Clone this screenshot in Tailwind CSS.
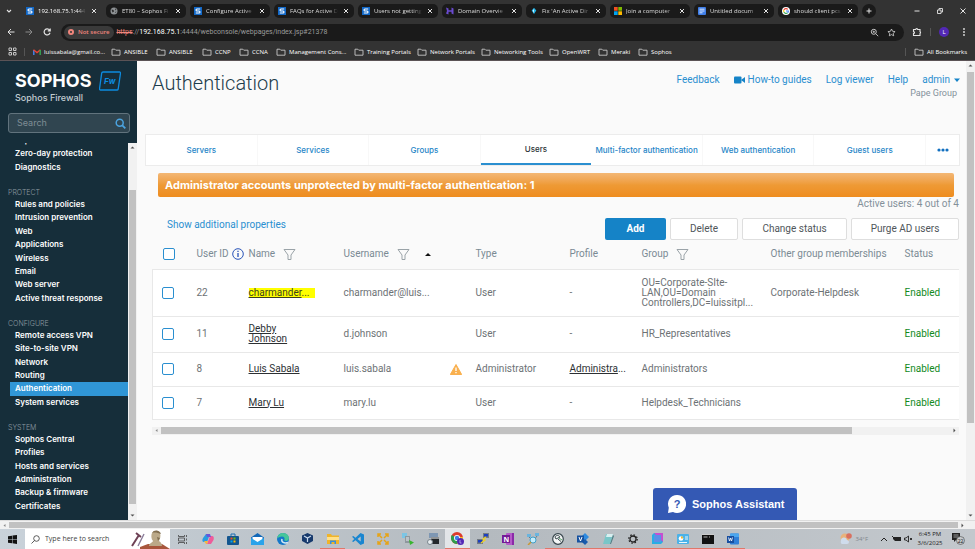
<!DOCTYPE html>
<html lang="en">
<head>
  <meta charset="UTF-8" />
  <meta name="viewport" content="width=device-width, initial-scale=1.0" />
  <title>Authentication - Sophos Firewall</title>
  <script src="https://cdn.jsdelivr.net/npm/@tailwindcss/browser@4"></script>
</head>
<body class="flex flex-col h-screen overflow-hidden bg-[#fafafa] font-[Roboto,'Liberation_Sans',sans-serif]">

  <!-- Shared icons -->
  <svg class="hidden">
    <symbol id="close" viewBox="0 0 8 8"><path d="M2 2l4 4M6 2l-4 4" stroke="#e3e3e3" stroke-width="1" /></symbol>
    <symbol id="folder" viewBox="0 0 10 8"><path d="M1 1.2h2.8l1 1h4.2v5h-8z" fill="none" stroke="#c7c7c7" stroke-width="0.9" stroke-linejoin="round" /></symbol>
    <symbol id="sophos" viewBox="0 0 8 8"><rect width="8" height="8" fill="#1268c7" /><path d="M6.2 2H3a1 1 0 0 0 0 2h2a1 1 0 0 1 0 2H1.8" fill="none" stroke="#fff" stroke-width="1.1" /></symbol>
    <symbol id="filter" viewBox="0 0 13 13"><path d="M1 1.5h11L8 7v4.5H5V7z" fill="none" stroke="#9aa3a8" stroke-width="1" stroke-linejoin="round" /></symbol>
  </svg>

  <!-- Browser chrome -->
  <header class="shrink-0 bg-[#333333] text-[#dedede] text-[6px] leading-[8px] font-['Open_Sans',sans-serif] border-b border-[#5b5356]">
    <div class="flex items-center h-[21px] gap-1">
      <button class="w-[18px] flex justify-center" aria-label="Search tabs">
        <svg class="size-2" viewBox="0 0 8 8"><path d="M2 3l2 2 2-2" fill="none" stroke="#e3e3e3" stroke-width="1.1" /></svg>
      </button>
      <div class="flex items-center w-20 h-[14px] px-1 gap-1 text-white">
        <svg class="size-2 shrink-0"><use href="#sophos" /></svg>
        <span class="flex-1 whitespace-nowrap mask-r-from-80%">192.168.75.1:444</span>
        <button aria-label="Close"><svg class="size-2"><use href="#close" /></svg></button>
      </div>
      <div class="flex items-center w-20 h-[14px] px-1 gap-1 rounded-[5px] bg-[#1a1a1a]">
        <svg class="size-2 shrink-0" viewBox="0 0 8 8"><circle cx="4" cy="4" r="3.5" fill="#8d9194" /><path d="M1.5 2.5l2 .5.5 1.5-1.5 1zM5 1.2l1.5 1.3-1 1zM5 5l1.5-.5-.8 1.6z" fill="#2b2b2b" /></svg>
        <span class="flex-1 whitespace-nowrap mask-r-from-80%">ET80 – Sophos Fi</span>
        <button aria-label="Close"><svg class="size-2"><use href="#close" /></svg></button>
      </div>
      <div class="flex items-center w-20 h-[14px] px-1 gap-1 rounded-[5px] bg-[#1a1a1a]">
        <svg class="size-2 shrink-0"><use href="#sophos" /></svg>
        <span class="flex-1 whitespace-nowrap mask-r-from-80%">Configure Active</span>
        <button aria-label="Close"><svg class="size-2"><use href="#close" /></svg></button>
      </div>
      <div class="flex items-center w-20 h-[14px] px-1 gap-1 rounded-[5px] bg-[#1a1a1a]">
        <svg class="size-2 shrink-0"><use href="#sophos" /></svg>
        <span class="flex-1 whitespace-nowrap mask-r-from-80%">FAQs for Active D</span>
        <button aria-label="Close"><svg class="size-2"><use href="#close" /></svg></button>
      </div>
      <div class="flex items-center w-20 h-[14px] px-1 gap-1 rounded-[5px] bg-[#1a1a1a]">
        <svg class="size-2 shrink-0"><use href="#sophos" /></svg>
        <span class="flex-1 whitespace-nowrap mask-r-from-80%">Users not getting</span>
        <button aria-label="Close"><svg class="size-2"><use href="#close" /></svg></button>
      </div>
      <div class="flex items-center w-20 h-[14px] px-1 gap-1 rounded-[5px] bg-[#1a1a1a]">
        <svg class="size-2 shrink-0" viewBox="0 0 8 8"><path d="M0 .5l2.5 1v1.7h3V.5l2 1v6l-2-1V4.8h-3v2.7l-2.5-1 1-2.5z" fill="#6a4bd0" /></svg>
        <span class="flex-1 whitespace-nowrap mask-r-from-80%">Domain Overvie</span>
        <button aria-label="Close"><svg class="size-2"><use href="#close" /></svg></button>
      </div>
      <div class="flex items-center w-20 h-[14px] px-1 gap-1 rounded-[5px] bg-[#1a1a1a]">
        <svg class="size-2 shrink-0" viewBox="0 0 8 8"><path d="M4 .8l2.3 2.7L4 7 1.7 3.5z" fill="#23b5e8" /><path d="M4 2v4l-1.3-2.3z" fill="#d9f6ff" /></svg>
        <span class="flex-1 whitespace-nowrap mask-r-from-80%">Fix 'An Active Dir</span>
        <button aria-label="Close"><svg class="size-2"><use href="#close" /></svg></button>
      </div>
      <div class="flex items-center w-20 h-[14px] px-1 gap-1 rounded-[5px] bg-[#1a1a1a]">
        <svg class="size-2 shrink-0" viewBox="0 0 8 8"><path d="M0 0h3.7v3.7H0z" fill="#f25022" /><path d="M4.3 0H8v3.7H4.3z" fill="#7fba00" /><path d="M0 4.3h3.7V8H0z" fill="#00a4ef" /><path d="M4.3 4.3H8V8H4.3z" fill="#ffb900" /></svg>
        <span class="flex-1 whitespace-nowrap mask-r-from-80%">Join a computer</span>
        <button aria-label="Close"><svg class="size-2"><use href="#close" /></svg></button>
      </div>
      <div class="flex items-center w-20 h-[14px] px-1 gap-1 rounded-[5px] bg-[#1a1a1a]">
        <svg class="size-2 shrink-0" viewBox="0 0 8 8"><rect width="8" height="8" rx="1" fill="#3f7ee8" /><path d="M1.5 2.2h5M1.5 4h5M1.5 5.8h3" stroke="#fff" stroke-width=".8" /></svg>
        <span class="flex-1 whitespace-nowrap mask-r-from-80%">Untitled docum</span>
        <button aria-label="Close"><svg class="size-2"><use href="#close" /></svg></button>
      </div>
      <div class="flex items-center w-20 h-[14px] px-1 gap-1 rounded-[5px] bg-[#1a1a1a]">
        <svg class="size-2 shrink-0" viewBox="0 0 8 8"><circle cx="4" cy="4" r="4" fill="#fff" /><g fill="none" stroke-width="1.1"><path d="M5.8 2.4A2.4 2.4 0 0 0 1.9 2.9" stroke="#ea4335" /><path d="M1.9 2.9a2.4 2.4 0 0 0 0 2.2" stroke="#fbbc05" /><path d="M1.9 5.1a2.4 2.4 0 0 0 3.7.7" stroke="#34a853" /><path d="M5.6 5.8A2.4 2.4 0 0 0 6.4 4H4" stroke="#4285f4" /></g></svg>
        <span class="flex-1 whitespace-nowrap mask-r-from-80%">should client pcs</span>
        <button aria-label="Close"><svg class="size-2"><use href="#close" /></svg></button>
      </div>
      <button class="size-[14px] rounded-full bg-[#1a1a1a] flex items-center justify-center" aria-label="New tab">
        <svg class="size-2" viewBox="0 0 8 8"><path d="M4 1.5v5M1.5 4h5" stroke="#e3e3e3" /></svg>
      </button>
      <div class="flex ml-auto pr-2 gap-[15px]">
        <button aria-label="Minimize"><svg class="size-2" viewBox="0 0 8 8"><path d="M1.5 4h5" stroke="#e3e3e3" /></svg></button>
        <button aria-label="Restore"><svg class="size-2" viewBox="0 0 8 8"><path d="M1.5 3h3.5v3.5H1.5zM3 3V1.5h3.5V5H5" fill="none" stroke="#e3e3e3" stroke-width=".9" /></svg></button>
        <button aria-label="Close window"><svg class="size-2" viewBox="0 0 8 8"><path d="M1.5 1.5l5 5M6.5 1.5l-5 5" stroke="#e3e3e3" /></svg></button>
      </div>
    </div>

    <div class="flex items-center h-[22px] pl-[6px] pr-2">
      <div class="flex gap-2 w-[55px]">
        <button aria-label="Back"><svg class="size-[10px]" viewBox="0 0 10 10"><path d="M8.5 5H2M5 2L2 5l3 3" fill="none" stroke="#e3e3e3" /></svg></button>
        <button aria-label="Forward"><svg class="size-[10px]" viewBox="0 0 10 10"><path d="M1.5 5H8M5 2l3 3-3 3" fill="none" stroke="#8a8a8a" /></svg></button>
        <button aria-label="Reload"><svg class="size-[10px]" viewBox="0 0 10 10"><path d="M7.6 3.2A3 3 0 1 0 8 5.8M8.2 1.5v2.3H5.8" fill="none" stroke="#e3e3e3" stroke-width="1.2" /></svg></button>
      </div>
      <div class="flex-1 flex items-center h-[17px] rounded-full bg-[#1a1a1a] pl-[3px] pr-2">
        <div class="flex items-center gap-1 h-[13px] rounded-full bg-[#3a3a3a] px-1 text-[#f0857c] font-semibold">
          <svg class="size-[6px]" viewBox="0 0 6 6"><circle cx="3" cy="3" r="3" fill="#f0857c" /><path d="M2.2 2.2l1.6 1.6M3.8 2.2L2.2 3.8" stroke="#3a3a3a" /></svg>
          Not secure
        </div>
        <p class="ml-[3px] text-[7px] leading-[10px] text-[#9a9a9a] whitespace-nowrap font-[Roboto,sans-serif]"><span class="text-[#f0857c] line-through">https</span>://<span class="text-white">192.168.75.1</span>:4444/webconsole/webpages/index.jsp#21378</p>
        <div class="flex gap-2 ml-auto">
          <button aria-label="Zoom"><svg class="size-[9px]" viewBox="0 0 9 9"><circle cx="3.8" cy="3.8" r="2.5" fill="none" stroke="#c7c7c7" /><path d="M5.6 5.6l2.6 2.6M2.7 3.8h2.2M3.8 2.7v2.2" stroke="#c7c7c7" stroke-width=".9" /></svg></button>
          <button aria-label="Bookmark"><svg class="size-[9px]" viewBox="0 0 9 9"><path d="M4.5 1l1.1 2.3 2.5.3-1.9 1.7.5 2.5-2.2-1.2-2.2 1.2.5-2.5L.9 3.6l2.5-.3z" fill="none" stroke="#d5d5d5" stroke-width=".8" /></svg></button>
        </div>
      </div>
      <div class="flex items-center gap-2 pl-2">
        <button aria-label="Extensions"><svg class="size-[10px]" viewBox="0 0 10 10"><path d="M1.5 2.5h2.2a1 1 0 0 1 2 0h2.3v2.2a1 1 0 0 1 0 1.8v2H1.5V6.6a1 1 0 0 0 0-2z" fill="none" stroke="#e3e3e3" stroke-width="1.1" /></svg></button>
        <div class="w-px h-2 bg-[#555]"></div>
        <button class="size-[10px] rounded-full bg-[#5228b5] text-white flex items-center justify-center">L</button>
        <button aria-label="Menu"><svg class="w-[10px] h-[10px]" viewBox="0 0 10 10" fill="#e3e3e3"><circle cx="7" cy="2" r=".9" /><circle cx="7" cy="5" r=".9" /><circle cx="7" cy="8" r=".9" /></svg></button>
      </div>
    </div>

    <nav class="flex items-center h-[17px] px-2 text-white whitespace-nowrap">
      <svg class="size-[9px] mr-[7px]" viewBox="0 0 9 9" fill="none" stroke="#c7c7c7"><path d="M1 1h2.5v2.5H1zM5.5 1H8v2.5H5.5zM1 5.5h2.5V8H1zM5.5 5.5H8V8H5.5z" /></svg>
      <div class="w-px h-2 bg-[#555] mr-2"></div>
      <a href="#" class="flex items-center gap-[3px] w-[78px]"><svg class="w-2 h-[6px]" viewBox="0 0 8 6" fill="none" stroke-width="1.4"><path d="M.8 6V1" stroke="#4285f4" /><path d="M.5.8L4 3.6 7.5.8" stroke="#ea4335" /><path d="M7.2 6V1" stroke="#34a853" /></svg>luissabala@gmail.co...</a>
      <a href="#" class="flex items-center gap-[3px] w-[45px]"><svg class="w-[10px] h-2"><use href="#folder" /></svg>ANSIBLE</a>
      <a href="#" class="flex items-center gap-[3px] w-[46px]"><svg class="w-[10px] h-2"><use href="#folder" /></svg>ANSIBLE</a>
      <a href="#" class="flex items-center gap-[3px] w-[37px]"><svg class="w-[10px] h-2"><use href="#folder" /></svg>CCNP</a>
      <a href="#" class="flex items-center gap-[3px] w-[37px]"><svg class="w-[10px] h-2"><use href="#folder" /></svg>CCNA</a>
      <a href="#" class="flex items-center gap-[3px] w-[78px]"><svg class="w-[10px] h-2"><use href="#folder" /></svg>Management Cons...</a>
      <a href="#" class="flex items-center gap-[3px] w-[63px]"><svg class="w-[10px] h-2"><use href="#folder" /></svg>Training Portals</a>
      <a href="#" class="flex items-center gap-[3px] w-[64px]"><svg class="w-[10px] h-2"><use href="#folder" /></svg>Network Portals</a>
      <a href="#" class="flex items-center gap-[3px] w-[68px]"><svg class="w-[10px] h-2"><use href="#folder" /></svg>Networking Tools</a>
      <a href="#" class="flex items-center gap-[3px] w-[49px]"><svg class="w-[10px] h-2"><use href="#folder" /></svg>OpenWRT</a>
      <a href="#" class="flex items-center gap-[3px] w-[40px]"><svg class="w-[10px] h-2"><use href="#folder" /></svg>Meraki</a>
      <a href="#" class="flex items-center gap-[3px]"><svg class="w-[10px] h-2"><use href="#folder" /></svg>Sophos</a>
      <div class="w-px h-2 bg-[#555] ml-auto mr-2"></div>
      <a href="#" class="flex items-center gap-[3px]"><svg class="w-[10px] h-2"><use href="#folder" /></svg>All Bookmarks</a>
    </nav>
  </header>

  <div class="flex flex-1 min-h-0">
    <!-- Sidebar -->
    <aside class="w-[137px] shrink-0 flex flex-col bg-[#162e3a] text-white font-[Inter,sans-serif]">
      <div class="flex items-center gap-2 pl-[15px] pt-[9px]">
        <span class="text-[18px] leading-[22px] font-bold">SOPHOS</span>
        <svg class="w-[22px] h-5" viewBox="0 0 22 20"><path d="M4 1h16.500a1 1 0 0 1 1 1.200l-2.300 15.800a1.300 1.300 0 0 1-1.300 1H1.500a1 1 0 0 1-1-1.200L2.700 2.100A1.300 1.300 0 0 1 4 1z" fill="none" stroke="#0d8ce0" stroke-width="1.300" /><text x="5" y="13" font-size="8" font-style="italic" font-weight="700" fill="#0d8ce0">Fw</text></svg>
      </div>
      <p class="pl-[15px] text-[9px] leading-[12px] font-medium text-[#c3cdd2]">Sophos Firewall</p>
      <form class="flex items-center h-5 mt-[9px] ml-2 mr-[7px] pl-2 pr-[3px] rounded-[3px] border border-[#61737d] bg-[#304550]">
        <input type="text" aria-label="Search" placeholder="Search" class="flex-1 min-w-0 text-[9px] leading-[14px] outline-none placeholder:text-[#7f8d95]" />
        <button type="button" aria-label="Search"><svg class="size-[11px]" viewBox="0 0 11 11"><circle cx="4.700" cy="4.700" r="3.500" fill="none" stroke="#4ba3df" stroke-width="1.500" /><path d="M7.300 7.300l3 3" stroke="#4ba3df" stroke-width="1.800" /></svg></button>
      </form>
      <div class="flex flex-1 min-h-0 mt-[10px]">
        <nav class="flex-1 overflow-hidden text-[8px] leading-[13px] font-semibold whitespace-nowrap">
          <ul class="flex flex-col h-10 -mt-[9px] *:flex-1 *:pl-[15px]">
            <li><a href="#">Reports</a></li>
            <li><a href="#">Zero-day protection</a></li>
            <li><a href="#">Diagnostics</a></li>
          </ul>
          <h2 class="pl-2 pt-[13px] leading-[11px] text-[7px] font-light text-[#8e9ba2]">PROTECT</h2>
          <ul class="flex flex-col h-[107px] *:flex-1 *:pl-[15px]">
            <li><a href="#">Rules and policies</a></li>
            <li><a href="#">Intrusion prevention</a></li>
            <li><a href="#">Web</a></li>
            <li><a href="#">Applications</a></li>
            <li><a href="#">Wireless</a></li>
            <li><a href="#">Email</a></li>
            <li><a href="#">Web server</a></li>
            <li><a href="#">Active threat response</a></li>
          </ul>
          <h2 class="pl-2 pt-[13px] leading-[11px] text-[7px] font-light text-[#8e9ba2]">CONFIGURE</h2>
          <ul class="flex flex-col h-20 *:flex-1">
            <li class="pl-[15px]"><a href="#">Remote access VPN</a></li>
            <li class="pl-[15px]"><a href="#">Site-to-site VPN</a></li>
            <li class="pl-[15px]"><a href="#">Network</a></li>
            <li class="pl-[15px]"><a href="#">Routing</a></li>
            <li class="ml-[10px] pl-[5px] bg-[#3096d6]"><a href="#">Authentication</a></li>
            <li class="pl-[15px]"><a href="#">System services</a></li>
          </ul>
          <h2 class="pl-2 pt-[13px] leading-[11px] text-[7px] font-light text-[#8e9ba2]">SYSTEM</h2>
          <ul class="flex flex-col h-20 *:flex-1 *:pl-[15px]">
            <li><a href="#">Sophos Central</a></li>
            <li><a href="#">Profiles</a></li>
            <li><a href="#">Hosts and services</a></li>
            <li><a href="#">Administration</a></li>
            <li><a href="#">Backup &amp; firmware</a></li>
            <li><a href="#">Certificates</a></li>
          </ul>
        </nav>
        <div class="w-[9px] flex flex-col items-center bg-[#f1f1f1]">
          <svg class="w-[9px] h-[9px]" viewBox="0 0 9 9"><path d="M2.500 5.500h4l-2-2z" fill="#505050" /></svg>
          <div class="flex-1 w-[7px] mt-[38px] mb-[7px] bg-[#c1c1c1]"></div>
          <svg class="w-[9px] h-[9px]" viewBox="0 0 9 9"><path d="M2.500 3.500h4l-2 2z" fill="#505050" /></svg>
        </div>
      </div>
    </aside>

    <!-- Main content -->
    <main class="relative flex-1 min-w-0 pl-2 pr-[6px] text-[10px] leading-[14px] text-[#6d7275]">
      <div class="flex justify-between h-[73px] pl-[7px]">
        <h1 class="pt-2 text-[20px] leading-7 font-light text-[#1d3c4b]">Authentication</h1>
        <div class="pt-3 text-right">
          <nav class="flex items-center gap-[14px] text-[#2a8fd0]">
            <a href="#">Feedback</a>
            <a href="#" class="flex items-center gap-[3px]"><svg class="w-[11px] h-2" viewBox="0 0 11 8" fill="#1583c7"><rect y=".5" width="7.500" height="7" rx="1" /><path d="M7 4l4-3v6z" /></svg>How-to guides</a>
            <a href="#">Log viewer</a>
            <a href="#">Help</a>
            <a href="#" class="flex items-center gap-1">admin<svg class="w-[6px] h-1" viewBox="0 0 6 4"><path d="M0 .5h6L3 4z" fill="#1583c7" /></svg></a>
          </nav>
          <p class="pr-[3px] text-[9px] leading-[12px] text-[#84919a]">Pape Group</p>
        </div>
      </div>

      <nav class="flex h-8 bg-white border border-[#ececec] text-[8px] font-medium text-[#2585c7] font-[Inter,sans-serif] *:flex *:items-center *:justify-center">
        <a href="#" class="flex-1 border-r border-[#f8f8f8]">Servers</a>
        <a href="#" class="flex-1 border-r border-[#f8f8f8]">Services</a>
        <a href="#" class="flex-1 border-r border-[#f8f8f8]">Groups</a>
        <a href="#" class="flex-1 border-b-2 border-[#2a8fd0] text-[#2c3337]">Users</a>
        <a href="#" class="flex-1 border-r border-[#f8f8f8] whitespace-nowrap">Multi-factor authentication</a>
        <a href="#" class="flex-1 border-r border-[#f8f8f8]">Web authentication</a>
        <a href="#" class="flex-1 border-r border-[#f8f8f8]">Guest users</a>
        <button class="w-[33px]" aria-label="More tabs"><svg class="w-3 h-1" viewBox="0 0 12 4" fill="#1270c0"><circle cx="2" cy="2" r="1.600" /><circle cx="6" cy="2" r="1.600" /><circle cx="10" cy="2" r="1.600" /></svg></button>
      </nav>

      <div class="h-6 mt-[7px] ml-[13px] mr-[6px] px-[7px] rounded-[2px] bg-linear-to-b from-[#f3b774] via-[#ee9a35] to-[#ee8c1e] text-[11px] leading-6 font-bold font-[Inter,sans-serif] text-white">Administrator accounts unprotected by multi-factor authentication: 1</div>
      <p class="text-right leading-[13px] pr-px text-[#84919a]">Active users: 4 out of 4</p>

      <div class="flex items-end h-[30px] pl-[22px] pr-px gap-1">
        <a href="#" class="mr-auto self-center text-[#2a8fd0]">Show additional properties</a>
        <button class="w-[61px] h-[22px] rounded-[2px] bg-[#1583c7] text-white font-bold">Add</button>
        <button class="w-[68px] h-[22px] rounded-[2px] border border-[#dedede] bg-white text-[#50565a]">Delete</button>
        <button class="w-[105px] h-[22px] rounded-[2px] border border-[#dedede] bg-white text-[#50565a]">Change status</button>
        <button class="w-[108px] h-[22px] rounded-[2px] border border-[#dedede] bg-white text-[#50565a]">Purge AD users</button>
      </div>

      <div class="pl-[7px] pr-px">
        <table class="w-full table-fixed text-left">
          <colgroup>
            <col class="w-[40px]" /><col class="w-[52px]" /><col class="w-[95px]" /><col class="w-[106px]" /><col class="w-[26px]" />
            <col class="w-[94px]" /><col class="w-[72px]" /><col class="w-[129px]" /><col class="w-[134px]" /><col />
          </colgroup>
          <thead>
            <tr class="h-[29px] whitespace-nowrap text-[#7a8a94] *:font-normal *:pl-1">
              <th><input type="checkbox" aria-label="Select all" class="appearance-none block ml-[6px] size-3 rounded-[2px] border border-[#2a8fd0] bg-white" /></th>
              <th><div class="flex items-center gap-[3px]">User ID <svg class="size-3 shrink-0" viewBox="0 0 12 12"><circle cx="6" cy="6" r="5.300" fill="none" stroke="#2a54b8" stroke-width="1" /><path d="M6 5v4M6 2.700v1.300" stroke="#2a54b8" stroke-width="1.300" /></svg></div></th>
              <th><div class="flex items-center gap-2">Name <svg class="size-[13px]"><use href="#filter" /></svg></div></th>
              <th colspan="2"><div class="flex items-center gap-2">Username <svg class="size-[13px]"><use href="#filter" /></svg><svg class="w-[6px] h-[3px] ml-[7px]" viewBox="0 0 6 3"><path d="M0 3h6L3 0z" fill="#111" /></svg></div></th>
              <th>Type</th>
              <th>Profile</th>
              <th><div class="flex items-center gap-2">Group <svg class="size-[13px]"><use href="#filter" /></svg></div></th>
              <th>Other group memberships</th>
              <th>Status</th>
            </tr>
          </thead>
          <tbody class="bg-white border border-[#e8e8e8] border-r-0 *:border-b *:border-[#e8e8e8] leading-[10px]">
            <tr class="h-[47px] *:pl-1">
              <td><input type="checkbox" aria-label="Select charmander" class="appearance-none block ml-[5px] size-3 rounded-[2px] border border-[#2a8fd0]" /></td>
              <td>22</td>
              <td><a href="#" class="inline-block w-[66px] bg-[#ffff00] text-[#3b3f20]"><span class="underline">charmander</span>...</a></td>
              <td>charmander@luis...</td>
              <td></td>
              <td>User</td>
              <td>-</td>
              <td>OU=Corporate-SIte-<br />LAN,OU=Domain<br />Controllers,DC=luissitpl...</td>
              <td>Corporate-Helpdesk</td>
              <td class="text-[#118a1d]">Enabled</td>
            </tr>
            <tr class="h-[36px] *:pl-1">
              <td><input type="checkbox" aria-label="Select Debby Johnson" class="appearance-none block ml-[5px] size-3 rounded-[2px] border border-[#2a8fd0]" /></td>
              <td>11</td>
              <td><a href="#" class="underline text-[#2c3033]">Debby<br />Johnson</a></td>
              <td>d.johnson</td>
              <td></td>
              <td>User</td>
              <td>-</td>
              <td>HR_Representatives</td>
              <td></td>
              <td class="text-[#118a1d]">Enabled</td>
            </tr>
            <tr class="h-[34px] *:pl-1">
              <td><input type="checkbox" aria-label="Select Luis Sabala" class="appearance-none block ml-[5px] size-3 rounded-[2px] border border-[#2a8fd0]" /></td>
              <td>8</td>
              <td><a href="#" class="underline text-[#2c3033]">Luis Sabala</a></td>
              <td>luis.sabala</td>
              <td><svg class="w-3 h-[11px]" viewBox="0 0 12 11"><path d="M6 .5L11.700 10.500H.3z" fill="#f9b04e" stroke="#f9b04e" stroke-linejoin="round" /><path d="M6 3.500v3.500M6 8v1.300" stroke="#fff" stroke-width="1.300" /></svg></td>
              <td>Administrator</td>
              <td><a href="#" class="text-[#2c3033]"><span class="underline">Administra</span>...</a></td>
              <td>Administrators</td>
              <td></td>
              <td class="text-[#118a1d]">Enabled</td>
            </tr>
            <tr class="h-[33px] *:pl-1">
              <td><input type="checkbox" aria-label="Select Mary Lu" class="appearance-none block ml-[5px] size-3 rounded-[2px] border border-[#2a8fd0]" /></td>
              <td>7</td>
              <td><a href="#" class="underline text-[#2c3033]">Mary Lu</a></td>
              <td>mary.lu</td>
              <td></td>
              <td>User</td>
              <td>-</td>
              <td>Helpdesk_Technicians</td>
              <td></td>
              <td class="text-[#118a1d]">Enabled</td>
            </tr>
          </tbody>
        </table>
        <div class="flex items-center h-2 mt-[7px] bg-[#f1f1f1]">
          <svg class="size-[9px]" viewBox="0 0 9 9"><path d="M5.500 3v3l-2-1.500z" fill="#8a8a8a" /></svg>
          <div class="flex-1 h-[7px] mr-[98px] bg-[#c1c1c1]"></div>
          <svg class="size-[9px]" viewBox="0 0 9 9"><path d="M3.500 2.500v4l2-2z" fill="#505050" /></svg>
        </div>
      </div>

      <button class="absolute bottom-0 right-[169px] flex items-center gap-[6px] w-36 h-8 pl-[15px] rounded-t-[3px] bg-[#3459b4] text-white text-[11px] font-bold font-['Liberation_Sans',Arial,sans-serif] whitespace-nowrap">
        <svg class="size-[18px]" viewBox="0 0 18 18"><path d="M9 0a9 9 0 1 1-4 17L0 18l.8-5.300A9 9 0 0 1 9 0z" fill="#fff" /><text x="9" y="13" text-anchor="middle" font-size="11" font-weight="700" fill="#3459b4">?</text></svg>
        Sophos Assistant
      </button>
    </main>

    <div class="w-[9px] flex flex-col items-center bg-[#f1f1f1]">
      <svg class="size-[9px]" viewBox="0 0 9 9"><path d="M2.500 5.500h4l-2-2z" fill="#505050" /></svg>
      <div class="flex-1 w-[7px] mt-[2px] mb-[88px] bg-[#c1c1c1]"></div>
      <svg class="size-[9px]" viewBox="0 0 9 9"><path d="M2.500 3.500h4l-2 2z" fill="#505050" /></svg>
    </div>
  </div>

  <div class="shrink-0 flex items-center h-[9px] pr-2 bg-[#f1f1f1] border-t border-[#dcdcdc]">
    <svg class="size-[9px]" viewBox="0 0 9 9"><path d="M5.500 3v3l-2-1.500z" fill="#8a8a8a" /></svg>
    <div class="flex-1 h-[6px] bg-[#c1c1c1]"></div>
    <svg class="size-[9px]" viewBox="0 0 9 9"><path d="M3.500 2.500v4l2-2z" fill="#505050" /></svg>
  </div>

  <!-- Taskbar -->
  <footer class="shrink-0 flex items-center h-5 bg-linear-to-r from-[#c9d2da] via-[#b4babf] to-[#c3c8cd] text-[6px] leading-[9px] text-[#222] font-['Open_Sans',sans-serif]">
    <button class="w-[25px] flex justify-center" aria-label="Start"><svg class="size-[9px]" viewBox="0 0 9 9" fill="#111"><path d="M0 1.300l4-.6v3.500H0zM4.500.6L9 0v4.200H4.500zM0 4.700h4v3.500l-4-.5zM4.500 4.700H9V9l-4.500-.7z" /></svg></button>
    <label class="relative flex items-center w-[145px] h-5 pl-[6px] gap-[5px] bg-white">
      <svg class="size-[9px] shrink-0" viewBox="0 0 9 9"><circle cx="5.500" cy="3.500" r="2.800" fill="none" stroke="#333" stroke-width=".8" /><path d="M3.500 5.500L.5 8.500" stroke="#333" stroke-width=".8" /></svg>
      <input type="text" placeholder="Type here to search" class="w-[80px] text-[7px] leading-[10px] outline-none placeholder:text-[#444]" />
      <svg class="w-[39px] h-5 ml-auto shrink-0" viewBox="0 0 39 20"><path d="M1 17L8 6M5 4l5 4" stroke="#6e4155" stroke-width="2" /><path d="M7 17l6-12" stroke="#8a7d9a" stroke-width="1.400" /><path d="M9 20v-2l8-3h14l8 5z" fill="#a8563c" /><path d="M18 17c0-3 3-3 4-5-2-2-2-6-1-8 2-3 7-3 8 0s0 6-1 8c2 1 3 3 3 5z" fill="#bba988" /><path d="M21 4c2-4 8-3 9 1-3-1-6-2-9-1zM26 8l3 1-2 3z" fill="#826f50" /></svg>
    </label>
    <button class="w-[25px] flex justify-center" aria-label="Task view"><svg class="w-[10px] h-[9px]" viewBox="0 0 10 9" fill="none" stroke="#444" stroke-width=".8"><path d="M.5 0v1.500h6V0M.5 3h6v3h-6zM.5 9V7.500h6V9M8.500 0v2M8.500 3.500v2M8.500 7v2" /></svg></button>
    <div class="flex *:w-[25px] *:h-5 *:flex *:items-center *:justify-center *:border-b *:border-transparent">
      <button aria-label="Copilot"><svg class="size-3" viewBox="0 0 12 12"><path d="M4 1h4L5 9H2C0 9 0 7 1 5z" fill="#2a9be0" /><path d="M8 3h2c2 0 2 2 1.500 4L9 11H5z" fill="#ee5c9a" /><path d="M4 1h4l1 3H5z" fill="#6a55d8" /><path d="M2 8h4l-1 3H4z" fill="#f6b93b" /></svg></button>
      <button aria-label="Store"><svg class="size-3" viewBox="0 0 12 12"><path d="M4 3V1h4v2" fill="none" stroke="#1a6eb5" /><rect y="3" width="12" height="9" rx="1" fill="#13568f" /><path d="M3.500 4.500h2v2h-2z" fill="#f25022" /><path d="M6.500 4.500h2v2h-2z" fill="#7fba00" /><path d="M3.500 7.500h2v2h-2z" fill="#00a4ef" /><path d="M6.500 7.500h2v2h-2z" fill="#ffb900" /></svg></button>
      <button aria-label="Mail"><svg class="w-[13px] h-3" viewBox="0 0 13 12"><path d="M0 4.500L6.500 0 13 4.500V12H0z" fill="#1268b8" /><path d="M1.500 4h10v3l-5 3-5-3z" fill="#fff" /><path d="M0 5l6.500 4L13 5v7H0z" fill="#2aa3ea" /></svg></button>
      <button aria-label="Edge"><svg class="size-3" viewBox="0 0 12 12"><circle cx="6" cy="6" r="6" fill="#1477c9" /><path d="M0 5.500C1 1 4 0 6 0c4 0 6 3 6 5s-1.500 3-3 3-2-.8-1.500-1.500C8 5 7 3.500 5 3.500S1 4.500 0 5.500z" fill="#45c69a" /><path d="M5 6c-1 3 2 5 6 3.500" fill="none" stroke="#d4e8f2" stroke-width="1.500" /></svg></button>
      <button aria-label="VirtualBox"><svg class="size-[11px]" viewBox="0 0 11 11"><path d="M5.500 0L11 2.500V8L5.500 11 0 8V2.500z" fill="#173a6d" /><path d="M2 3l3.500 2L9 3M5.500 5v4" fill="none" stroke="#c9d9ec" stroke-width="1.200" /></svg></button>
      <button aria-label="File Explorer" class="border-[#e0776a]!"><svg class="w-3 h-[10px]" viewBox="0 0 12 10"><path d="M0 0h4l1 1.500h7V10H0z" fill="#f0b429" /><path d="M0 3h12v3H0z" fill="#ffe08a" /><path d="M3 10V6.500h6V10H7.500V8h-3v2z" fill="#3a8fd8" /></svg></button>
      <button aria-label="VS Code"><svg class="size-3" viewBox="0 0 12 12"><path d="M8.500 0L12 1.500v9L8.500 12 3.500 7.300 1.300 9 0 8.300 2.300 6 0 3.700 1.300 3l2.200 1.700zM8.700 3.500L5.500 6l3.200 2.500z" fill="#1a86d0" fill-rule="evenodd" /></svg></button>
      <button aria-label="VMware"><svg class="size-3" viewBox="0 0 12 12" fill="none" stroke="#e6a417" stroke-width="1.500"><path d="M1 4V1h3M8 1h3v3M11 8v3H8M4 11H1V8M1 1l4 4M11 1L7 5M11 11L7 7M1 11l4-4" /></svg></button>
      <button aria-label="WinSCP"><svg class="size-3" viewBox="0 0 12 12"><rect width="5" height="5" fill="#7cc5e4" /><rect x="3" y="3" width="5" height="7" fill="#8f989e" /><path d="M4 5h3M4 7h3" stroke="#e7edf0" /><path d="M7 7l5 2.500L8 12z" fill="#38b52f" /></svg></button>
      <button aria-label="Terminal"><svg class="size-3" viewBox="0 0 12 12"><rect x="2" width="9" height="5" fill="#7e97b3" /><rect x="4" y="4" width="8" height="7" fill="#23282c" /><path d="M4 5h8" stroke="#fff" /><circle cx="3" cy="9" r="2.500" fill="#e8edf0" stroke="#7a858d" /></svg></button>
      <button aria-label="Chrome" class="border-[#e0776a]! bg-[#e2e5e8]"><svg class="size-[13px]" viewBox="0 0 13 13"><circle cx="6" cy="6" r="6" fill="#dd3b2c" /><path d="M6 6L.8 3A6 6 0 0 0 6 12z" fill="#2f9e4b" /><path d="M6 12A6 6 0 0 0 12 5H6z" fill="#f6c026" /><circle cx="6" cy="6" r="3" fill="#fff" /><circle cx="6" cy="6" r="2.200" fill="#3d7de8" /><circle cx="9.500" cy="9.500" r="3.500" fill="#5228b5" /><path d="M9 8v3h1.500" fill="none" stroke="#cfc2f0" stroke-width=".7" /></svg></button>
      <button aria-label="PuTTY"><svg class="size-3" viewBox="0 0 12 12"><rect x="6" width="6" height="5" fill="#747b82" /><rect x="7" y="1" width="4" height="2.500" fill="#1c3fc0" /><rect y="6" width="6" height="5" fill="#747b82" /><rect x="1" y="7" width="4" height="2.500" fill="#1c3fc0" /><path d="M9 4L6 6l2 1-4 3" fill="none" stroke="#f0d31e" stroke-width="1.200" /></svg></button>
      <button aria-label="OneNote"><svg class="size-3" viewBox="0 0 12 12"><rect x="4" width="8" height="12" rx="1" fill="#b45ac8" /><path d="M10 0h2v12h-2z" fill="#8b2aa8" /><rect y="2" width="8" height="8" fill="#751a96" /><text x="1.500" y="8.500" font-size="7" font-weight="700" fill="#fff">N</text></svg></button>
      <button aria-label="Network scanner"><svg class="size-3" viewBox="0 0 12 12"><path d="M0 1h4v3H0zM8 0h4v3H8z" fill="#69b4de" /><path d="M2 4l3 3M10 3L7 7" stroke="#6b7b88" /><circle cx="6" cy="7" r="3" fill="#c4ecfb" stroke="#3f9fc9" /><path d="M4 9l-3 3" stroke="#c99733" stroke-width="1.500" /></svg></button>
      <button aria-label="OBS" class="border-[#e0776a]!"><svg class="size-3" viewBox="0 0 12 12"><circle cx="6" cy="6" r="5.300" fill="#f4f6f6" stroke="#38464d" stroke-width="1.200" /><path d="M3 4c1-2 4-2 5 0L4 6zM6 6l3 2.500" fill="none" stroke="#38464d" stroke-width="1" /><path d="M7 5l3 2" stroke="#5aa36b" /></svg></button>
      <button aria-label="Visio" class="border-[#e0776a]!"><svg class="size-3" viewBox="0 0 12 12"><path d="M8 0l4 4-4 4-4-4z" fill="#2f8be0" /><path d="M8 6l3 3-3 3-3-3z" fill="#195cad" /><rect y="2.500" width="7" height="7" fill="#1752a0" /><path d="M2 4l1.500 4L5 4" fill="none" stroke="#fff" /></svg></button>
      <button aria-label="Notepad" class="border-[#e0776a]!"><svg class="size-3" viewBox="0 0 12 12"><path d="M4 1h7L8 11H1z" fill="#79c6c8" /><path d="M5 1h6l-1 3H4z" fill="#d9eff0" /><path d="M11 2l1 1-3 8H8z" fill="#4e7e84" /></svg></button>
      <button aria-label="Settings" class="border-[#e0776a]!"><svg class="size-[10px]" viewBox="0 0 10 10"><circle cx="5" cy="5" r="3" fill="none" stroke="#222" stroke-width="1.300" /><circle cx="5" cy="5" r="4.200" fill="none" stroke="#222" stroke-width="1.300" stroke-dasharray="1.500 1.800" /></svg></button>
      <button aria-label="Phone Link" class="border-[#e0776a]!"><svg class="size-[11px]" viewBox="0 0 11 11"><path d="M0 2l2-2h9v9l-2 2H0z" fill="#28aee4" /><path d="M2 0h9v9z" fill="#c64fd0" /><path d="M2 2h7v7H2z" fill="#5b8fe8" /></svg></button>
      <button aria-label="Control Panel" class="border-[#e0776a]!"><svg class="w-3 h-[10px]" viewBox="0 0 12 10"><rect width="12" height="10" rx="1" fill="#4bb2e8" /><circle cx="4" cy="4.500" r="2.300" fill="#fff" /><path d="M4 4.500V2.200A2.300 2.300 0 0 1 6.300 4.500z" fill="#f1b732" /><path d="M8 3h3M8 5h3M2 8.500h8" stroke="#fff" stroke-width=".9" /></svg></button>
      <button aria-label="Command Prompt" class="border-[#e0776a]!"><svg class="w-3 h-[10px]" viewBox="0 0 12 10"><rect width="12" height="10" fill="#111" /><path d="M0 .5h12" stroke="#ccc" /><path d="M1.500 3h4M7 3h1" stroke="#ddd" stroke-width=".8" /></svg></button>
      <button aria-label="Word" class="border-[#e0776a]!"><svg class="size-3" viewBox="0 0 12 12"><rect x="3" y=".5" width="9" height="11" rx="1" fill="#2f7fd8" /><path d="M3 1.500a1 1 0 0 1 1-1h7a1 1 0 0 1 1 1V4H3z" fill="#4ba6ee" /><rect y="3" width="7" height="7" fill="#174ea0" /><path d="M1.500 4.500l1 3.500 1-3 1 3 1-3.500" fill="none" stroke="#fff" stroke-width=".8" /></svg></button>
    </div>
    <div class="flex items-center ml-auto pr-[10px]">
      <svg class="w-3 h-3 mr-[3px]" viewBox="0 0 12 12"><circle cx="5" cy="5" r="4.500" fill="#e8b27c" /><path d="M1 8a3 3 0 0 1 6-1 2 2 0 0 1 0 4H3a2 2 0 0 1-2-3z" fill="#cfdcec" /><circle cx="9" cy="3" r="2.800" fill="#d9705f" /></svg>
      <span class="text-[#7f858c] mr-3">34°F</span>
      <svg class="w-2 h-[6px] mr-1" viewBox="0 0 8 6"><path d="M1 5l3-3 3 3" fill="none" stroke="#222" /></svg>
      <svg class="w-[9px] h-[6px] mr-[3px]" viewBox="0 0 9 6"><path d="M1 1h8v4H3L1 3z" fill="#222" /><path d="M0 0l3 3" stroke="#222" /></svg>
      <svg class="w-[9px] h-2 mr-[5px]" viewBox="0 0 9 8" fill="none" stroke="#222" stroke-width=".9"><path d="M.5 3h1.500l2.500-2v6L2 5H.5zM6 3l2 2M8 3L6 5" /></svg>
      <p class="w-6 mr-[9px] text-center whitespace-nowrap flex flex-col items-center"><span>6:45 PM</span><span>3/6/2025</span></p>
      <svg class="w-[14px] h-3" viewBox="0 0 14 12"><path d="M1 0h8v7H5L3 9V7H1z" fill="#222" /><path d="M2.500 2h5M2.500 4h5" stroke="#ccc" stroke-width=".7" /><circle cx="9.500" cy="7.500" r="4" fill="#c6cacd" stroke="#444" stroke-width=".6" /><text x="9.500" y="9.500" text-anchor="middle" font-size="5" fill="#111">22</text></svg>
    </div>
  </footer>

</body>
</html>
